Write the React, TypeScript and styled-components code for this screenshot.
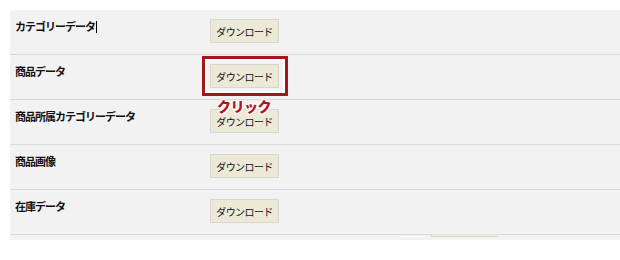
import styled, { createGlobalStyle } from "styled-components";

const GlobalStyle = createGlobalStyle`
    body {
        margin: 0;
        background: #ffffff;
        font-family: "Noto Sans CJK JP", "Liberation Sans", sans-serif;
    }
`;

const Panel = styled.div`
    margin: 10px 0 0 10px;
    background-color: #f2f2f2;
`;

const Row = styled.div`
    display: grid;
    grid-template-columns: 200px 1fr;
    height: 44px;
    border-bottom: 1px solid #d9d9d9;
`;

const Label = styled.div`
    padding: 9px 0 0 5px;
    font-size: 11px;
    line-height: 14px;
    font-weight: bold;
    letter-spacing: -1px;
    color: #111111;
`;

const Caret = styled.span`
    display: inline-block;
    width: 1px;
    height: 12px;
    margin-left: 1px;
    vertical-align: -2px;
    background-color: #000000;
`;

const Cell = styled.div`
    display: flex;
    align-items: flex-start;
    padding-top: 9px;
`;

const Wrap = styled.div`
    position: relative;
`;

const Button = styled.button`
    display: block;
    width: 69px;
    height: 24px;
    padding: 0;
    border: 1px solid #d9d7cd;
    background-color: #ece9d8;
    font-family: "Noto Sans CJK JP", sans-serif;
    font-size: 10px;
    letter-spacing: -0.6px;
    color: #111111;
    cursor: pointer;
`;

const Highlight = styled.div`
    position: absolute;
    left: -8px;
    top: -8px;
    right: -9px;
    bottom: -8px;
    border: 3px solid #a3161a;
    box-shadow: inset 0 0 0 2px #ffffff;
    pointer-events: none;
`;

const Note = styled.div`
    position: absolute;
    left: -2px;
    right: 0;
    top: 40px;
    text-align: center;
    font-size: 14px;
    line-height: 15px;
    font-weight: 900;
    letter-spacing: -0.5px;
    color: #b3161c;
    text-shadow:
        1px 0 0 #fff, -1px 0 0 #fff, 0 1px 0 #fff, 0 -1px 0 #fff,
        1px 1px 0 #fff, -1px -1px 0 #fff, 1px -1px 0 #fff, -1px 1px 0 #fff;
    z-index: 2;
`;

const Footer = styled.div`
    display: flex;
    align-items: flex-start;
    height: 5px;
`;

const Gap = styled.div`
    margin: 1px 0 0 390px;
    width: 26px;
    height: 1px;
    background-color: #ffffff;
`;

const Stub = styled.div`
    margin: -1px 0 0 5px;
    width: 67px;
    height: 3px;
    background-color: #ebe9dc;
    border: 1px solid #dedbcc;
    border-top: none;
    box-sizing: border-box;
`;

const rows = [
    "カテゴリーデータ",
    "商品データ",
    "商品所属カテゴリーデータ",
    "商品画像",
    "在庫データ",
];

function App() {
    return (
        <>
            <GlobalStyle />
            <Panel>
                {rows.map((name, i) => (
                    <Row key={name}>
                        <Label>
                            {name}
                            {i === 0 && <Caret />}
                        </Label>
                        <Cell>
                            <Wrap>
                                <Button>ダウンロード</Button>
                                {i === 1 && (
                                    <Highlight>
                                        <Note>クリック</Note>
                                    </Highlight>
                                )}
                            </Wrap>
                        </Cell>
                    </Row>
                ))}
                <Footer>
                    <Gap />
                    <Stub />
                </Footer>
            </Panel>
        </>
    );
}

export default App;
